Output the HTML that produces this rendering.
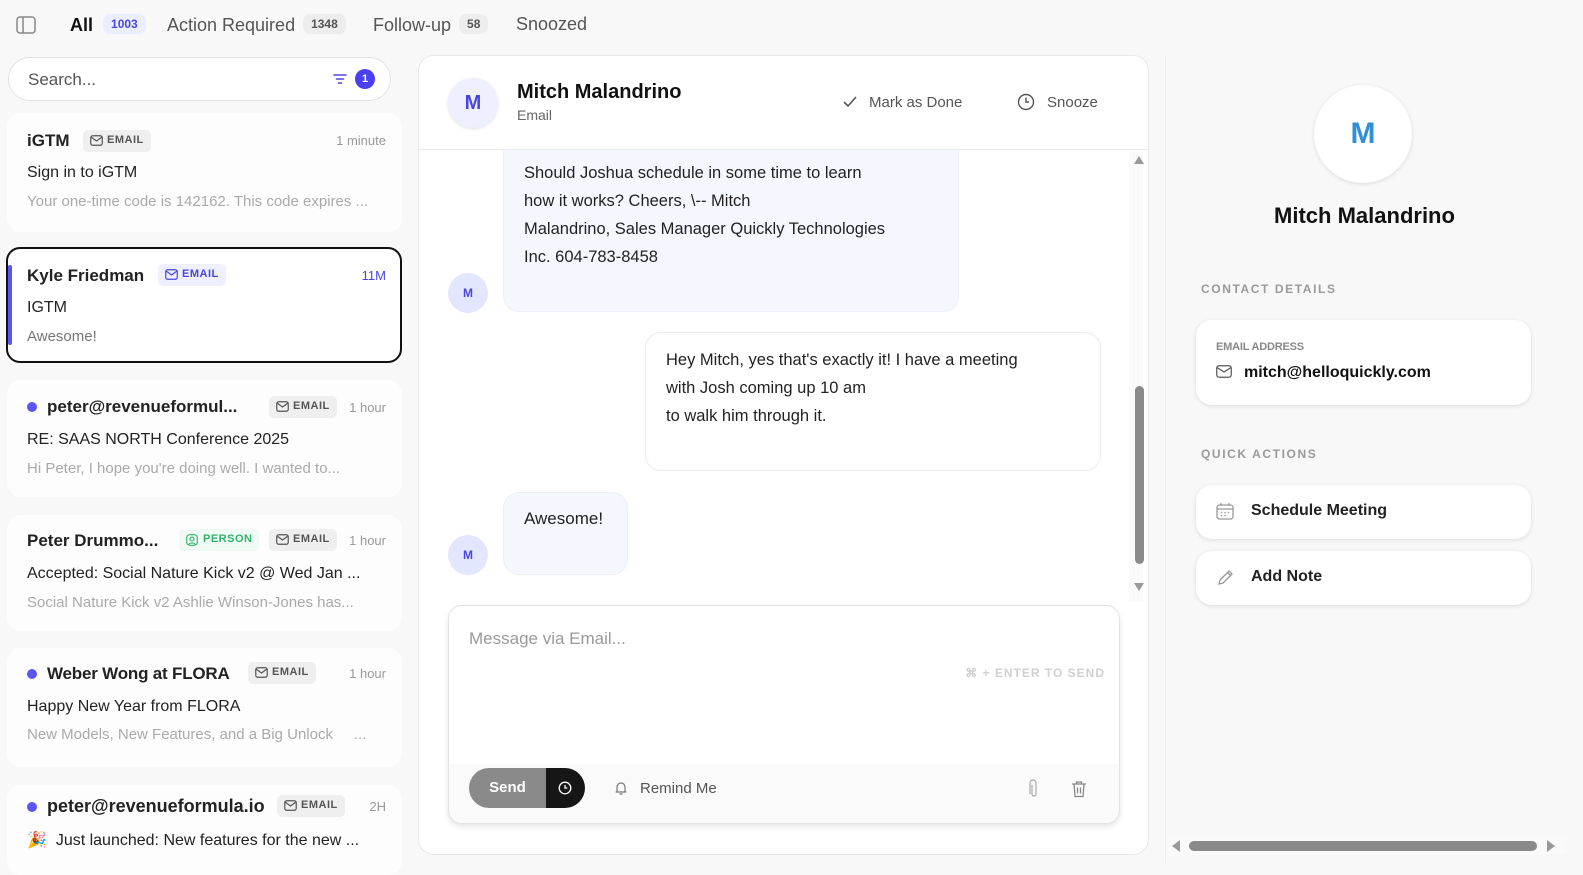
<!DOCTYPE html>
<html><head><meta charset="utf-8"><style>
*{box-sizing:border-box;margin:0;padding:0}
body{width:1583px;height:872px;overflow:hidden;background:#f8f8f8;font-family:"Liberation Sans",sans-serif;color:#1a1a1a;position:relative}
.abs{position:absolute}
.tab{position:absolute;top:14px;font-size:18px;color:#555}
.cnt{display:inline-block;font-size:12px;padding:3px 8px;border-radius:7px;background:#ededed;color:#555;margin-left:8px;vertical-align:3px;font-weight:bold}
.card{position:absolute;left:7px;width:395px;background:#fdfdfe;border-radius:14px}
.nm{position:absolute;left:20px;font-size:17px;font-weight:bold;color:#222;white-space:nowrap}
.badge{position:absolute;font-size:11px;font-weight:bold;letter-spacing:.5px;color:#555;background:#efefef;border-radius:5px;padding:4px 7px 4px 24px;height:22px}
.badge svg{position:absolute;left:7px;top:5px}
.tm{position:absolute;right:16px;font-size:13px;color:#999}
.sub{position:absolute;left:20px;font-size:16px;color:#222;white-space:nowrap}
.pre{position:absolute;left:20px;font-size:15px;color:#aaa;white-space:nowrap}
.dot{position:absolute;left:20px;width:10px;height:10px;border-radius:50%;background:#5b55f5}
.sec{position:absolute;left:1201px;font-size:12px;font-weight:bold;letter-spacing:1.6px;color:#9a9a9a}
.rc{position:absolute;left:1196px;width:335px;background:#fff;border-radius:16px;box-shadow:0 1px 4px rgba(0,0,0,.12)}
.msg{font-size:17px;line-height:28px;color:#222;white-space:nowrap}
</style></head><body>
<svg class="abs" style="left:16px;top:16px" width="20" height="18" viewBox="0 0 20 18"><rect x="1" y="1" width="18" height="16" rx="3" fill="none" stroke="#888" stroke-width="1.5"/><line x1="7" y1="1" x2="7" y2="17" stroke="#888" stroke-width="1.5"/></svg>
<div class="tab" style="left:70px;color:#111;font-weight:bold">All<span class="cnt" style="background:#ebeeff;color:#4b45e0;margin-left:10px">1003</span></div>
<div class="tab" style="left:167px">Action Required<span class="cnt">1348</span></div>
<div class="tab" style="left:373px">Follow-up<span class="cnt">58</span></div>
<div class="tab" style="left:516px">Snoozed</div>
<div class="abs" style="left:8px;top:57px;width:383px;height:44px;border:1px solid #e2e2e2;border-radius:22px;background:#fff"></div>
<div class="abs" style="left:28px;top:70px;font-size:17px;color:#555">Search...</div>
<svg class="abs" style="left:333px;top:73px" width="14" height="12" viewBox="0 0 14 12"><g stroke="#4b45e0" stroke-width="1.6" stroke-linecap="round"><line x1="1" y1="2" x2="13" y2="2"/><line x1="3.5" y1="6" x2="10.5" y2="6"/><line x1="5.5" y1="10" x2="8.5" y2="10"/></g></svg>
<div class="abs" style="left:355px;top:69px;width:20px;height:20px;border-radius:50%;background:#4b3ff0;color:#fff;font-size:11px;font-weight:bold;text-align:center;line-height:20px">1</div>
<div class="card" style="top:113px;height:119px">
 <div class="nm" style="top:18px">iGTM</div>
 <div class="badge" style="left:76px;top:17px"><svg width="13" height="11" viewBox="0 0 13 11"><rect x=".75" y=".75" width="11.5" height="9.5" rx="2" fill="none" stroke="#555" stroke-width="1.2"/><path d="M1 2l5.5 4L12 2" fill="none" stroke="#555" stroke-width="1.2"/></svg>EMAIL</div>
 <div class="tm" style="top:20px">1 minute</div>
 <div class="sub" style="top:51px">Sign in to iGTM</div>
 <div class="pre" style="top:80px">Your one-time code is 142162. This code expires ...</div>
</div>
<div class="card" style="top:247px;height:116px;background:#fff;border:2px solid #111;left:6px;width:396px">
 <div class="abs" style="left:0;top:16px;width:4px;height:80px;background:#5b55f5;border-radius:2px"></div>
 <div class="nm" style="top:17px;left:19px">Kyle Friedman</div>
 <div class="badge" style="left:150px;top:15px;background:#eef0ff;color:#4b45e0"><svg width="13" height="11" viewBox="0 0 13 11"><rect x=".75" y=".75" width="11.5" height="9.5" rx="2" fill="none" stroke="#4b45e0" stroke-width="1.2"/><path d="M1 2l5.5 4L12 2" fill="none" stroke="#4b45e0" stroke-width="1.2"/></svg>EMAIL</div>
 <div class="tm" style="top:19px;right:14px;color:#4b45e0">11M</div>
 <div class="sub" style="top:50px;left:19px">IGTM</div>
 <div class="pre" style="top:79px;left:19px;color:#777">Awesome!</div>
</div>
<div class="card" style="top:380px;height:117px">
 <div class="dot" style="top:22px"></div>
 <div class="nm" style="top:17px;left:40px">peter@revenueformul...</div>
 <div class="badge" style="left:262px;top:16px"><svg width="13" height="11" viewBox="0 0 13 11"><rect x=".75" y=".75" width="11.5" height="9.5" rx="2" fill="none" stroke="#555" stroke-width="1.2"/><path d="M1 2l5.5 4L12 2" fill="none" stroke="#555" stroke-width="1.2"/></svg>EMAIL</div>
 <div class="tm" style="top:20px">1 hour</div>
 <div class="sub" style="top:51px">RE: SAAS NORTH Conference 2025</div>
 <div class="pre" style="top:80px">Hi Peter, I hope you're doing well. I wanted to...</div>
</div>
<div class="card" style="top:515px;height:116px">
 <div class="nm" style="top:16px">Peter Drummo...</div>
 <div class="badge" style="left:172px;top:14px;background:#eefaf3;color:#2fb36b"><svg width="12" height="12" viewBox="0 0 12 12"><rect x=".7" y=".7" width="10.6" height="10.6" rx="3" fill="none" stroke="#2fb36b" stroke-width="1.1"/><circle cx="6" cy="5" r="2" fill="none" stroke="#2fb36b" stroke-width="1.1"/><path d="M2.8 10.5c.8-2 5.6-2 6.4 0" fill="none" stroke="#2fb36b" stroke-width="1.1"/></svg>PERSON</div>
 <div class="badge" style="left:262px;top:14px"><svg width="13" height="11" viewBox="0 0 13 11"><rect x=".75" y=".75" width="11.5" height="9.5" rx="2" fill="none" stroke="#555" stroke-width="1.2"/><path d="M1 2l5.5 4L12 2" fill="none" stroke="#555" stroke-width="1.2"/></svg>EMAIL</div>
 <div class="tm" style="top:18px">1 hour</div>
 <div class="sub" style="top:50px">Accepted: Social Nature Kick v2 @ Wed Jan ...</div>
 <div class="pre" style="top:79px">Social Nature Kick v2 Ashlie Winson-Jones has...</div>
</div>
<div class="card" style="top:648px;height:119px">
 <div class="dot" style="top:21px"></div>
 <div class="nm" style="top:16px;left:40px;font-size:17px;letter-spacing:-.2px">Weber Wong at FLORA</div>
 <div class="badge" style="left:241px;top:14px"><svg width="13" height="11" viewBox="0 0 13 11"><rect x=".75" y=".75" width="11.5" height="9.5" rx="2" fill="none" stroke="#555" stroke-width="1.2"/><path d="M1 2l5.5 4L12 2" fill="none" stroke="#555" stroke-width="1.2"/></svg>EMAIL</div>
 <div class="tm" style="top:18px">1 hour</div>
 <div class="sub" style="top:50px">Happy New Year from FLORA</div>
 <div class="pre" style="top:78px">New Models, New Features, and a Big Unlock&nbsp;&nbsp;&nbsp;&nbsp;&nbsp;...</div>
</div>
<div class="card" style="top:785px;height:90px">
 <div class="dot" style="top:17px"></div>
 <div class="nm" style="top:11px;left:40px;font-size:18px">peter@revenueformula.io</div>
 <div class="badge" style="left:270px;top:10px"><svg width="13" height="11" viewBox="0 0 13 11"><rect x=".75" y=".75" width="11.5" height="9.5" rx="2" fill="none" stroke="#555" stroke-width="1.2"/><path d="M1 2l5.5 4L12 2" fill="none" stroke="#555" stroke-width="1.2"/></svg>EMAIL</div>
 <div class="tm" style="top:14px">2H</div>
 <div class="sub" style="top:45px">🎉&nbsp; Just launched: New features for the new ...</div>
</div>
<div class="abs" style="left:418px;top:55px;width:731px;height:800px;background:#fff;border:1px solid #e8e8e8;border-radius:16px;overflow:hidden">
 <div class="abs" style="left:0;top:0;width:731px;height:94px;border-bottom:1px solid #ececec;background:#fff;z-index:2">
  <div class="abs" style="left:29px;top:22px;width:50px;height:50px;border-radius:50%;background:#eef0ff;box-shadow:0 1px 3px rgba(0,0,0,.12);color:#4b45e0;font-weight:bold;font-size:20px;text-align:center;line-height:50px">M</div>
  <div class="abs" style="left:98px;top:25px;font-size:20px;font-weight:bold;color:#111">Mitch Malandrino</div>
  <div class="abs" style="left:98px;top:51px;font-size:14px;color:#666">Email</div>
  <svg class="abs" style="left:424px;top:40px" width="14" height="12" viewBox="0 0 14 12"><path d="M1 6l4 4 8-9" fill="none" stroke="#555" stroke-width="1.6"/></svg>
  <div class="abs" style="left:450px;top:38px;font-size:15px;color:#555">Mark as Done</div>
  <svg class="abs" style="left:598px;top:37px" width="18" height="18" viewBox="0 0 18 18"><circle cx="9" cy="9" r="7.5" fill="none" stroke="#555" stroke-width="1.4"/><path d="M9 4.5V9h3" fill="none" stroke="#555" stroke-width="1.4"/></svg>
  <div class="abs" style="left:628px;top:38px;font-size:15px;color:#555">Snooze</div>
 </div>
 <div class="abs msg" style="left:84px;top:40px;width:456px;height:216px;background:#f5f7ff;border:1px solid #eceffc;border-radius:16px;padding:62px 20px 0 20px;font-size:16.5px">Should Joshua schedule in some time to learn<br>how it works? Cheers, \-- Mitch<br>Malandrino, Sales Manager Quickly Technologies<br>Inc. 604-783-8458</div>
 <div class="abs" style="left:29px;top:217px;width:40px;height:40px;border-radius:50%;background:#e3e6ff;color:#4b45e0;font-size:12px;font-weight:bold;text-align:center;line-height:40px">M</div>
 <div class="abs msg" style="left:226px;top:276px;width:456px;height:139px;border:1px solid #ececec;border-radius:16px;padding:13px 20px;font-size:16.5px">Hey Mitch, yes that's exactly it! I have a meeting<br>with Josh coming up 10 am<br>to walk him through it.</div>
 <div class="abs msg" style="left:84px;top:436px;width:125px;height:83px;background:#f5f7ff;border:1px solid #eceffc;border-radius:16px;padding:12px 20px">Awesome!</div>
 <div class="abs" style="left:29px;top:479px;width:40px;height:40px;border-radius:50%;background:#e3e6ff;color:#4b45e0;font-size:12px;font-weight:bold;text-align:center;line-height:40px">M</div>
 <div class="abs" style="left:710px;top:96px;width:14px;height:450px;background:#fafafa"></div>
 <div class="abs" style="left:715px;top:100px;width:0;height:0;border-left:5px solid transparent;border-right:5px solid transparent;border-bottom:8px solid #999"></div>
 <div class="abs" style="left:716px;top:330px;width:9px;height:178px;background:#8a8a8a;border-radius:5px"></div>
 <div class="abs" style="left:715px;top:527px;width:0;height:0;border-left:5px solid transparent;border-right:5px solid transparent;border-top:8px solid #999"></div>
 <div class="abs" style="left:29px;top:549px;width:672px;height:219px;border:1px solid #e3e3e3;border-radius:14px;box-shadow:0 3px 6px rgba(0,0,0,.1);overflow:hidden;background:#fff">
  <div class="abs" style="left:20px;top:23px;font-size:17px;color:#999">Message via Email...</div>
  <div class="abs" style="right:14px;top:60px;font-size:12px;font-weight:bold;letter-spacing:1px;color:#d0d0d0">⌘ + ENTER TO SEND</div>
  <div class="abs" style="left:0;top:158px;width:672px;height:61px;background:#fafafa"></div>
  <div class="abs" style="left:20px;top:162px;width:116px;height:40px;border-radius:20px;overflow:hidden">
   <div class="abs" style="left:0;top:0;width:77px;height:40px;background:#8a8a8a;color:#fff;font-weight:bold;font-size:15px;text-align:center;line-height:40px">Send</div>
   <div class="abs" style="left:77px;top:0;width:39px;height:40px;background:#161616"></div>
   <svg class="abs" style="left:89px;top:13px" width="14" height="14" viewBox="0 0 14 14"><circle cx="7" cy="7" r="5.8" fill="none" stroke="#fff" stroke-width="1.3"/><path d="M7 4v3h2.3" fill="none" stroke="#fff" stroke-width="1.3"/></svg>
  </div>
  <svg class="abs" style="left:166px;top:175px" width="12" height="15" viewBox="0 0 12 15"><path d="M2 11V6a4 4 0 018 0v5h1.3H.7M4.5 13h3" fill="none" stroke="#777" stroke-width="1.2"/></svg>
  <div class="abs" style="left:191px;top:174px;font-size:15px;color:#555">Remind Me</div>
  <svg class="abs" style="left:580px;top:173px" width="10" height="20" viewBox="0 0 10 20"><path d="M3 6v9a2 2 0 004 0V4a3 3 0 00-6 0v11" fill="none" stroke="#aaa" stroke-width="1.2"/></svg>
  <svg class="abs" style="left:622px;top:174px" width="16" height="18" viewBox="0 0 16 18"><path d="M1 4h14M5.5 4V2h5v2M3 4l1 12.5h8L13 4M6.5 7.5v6M9.5 7.5v6" fill="none" stroke="#888" stroke-width="1.3"/></svg>
 </div>
</div>
<div class="abs" style="left:1165px;top:55px;width:1px;height:808px;background:#ececec"></div>
<div class="abs" style="left:1314px;top:85px;width:98px;height:98px;border-radius:50%;background:#fff;box-shadow:0 1px 4px rgba(0,0,0,.12);color:#2f8fd8;font-size:30px;font-weight:bold;text-align:center;line-height:98px">M</div>
<div class="abs" style="left:1166px;top:203px;width:397px;text-align:center;font-size:22px;font-weight:bold;color:#111">Mitch Malandrino</div>
<div class="sec" style="top:282px">CONTACT DETAILS</div>
<div class="rc" style="top:320px;height:85px">
 <div class="abs" style="left:20px;top:21px;font-size:11px;font-weight:bold;color:#888;letter-spacing:-.2px">EMAIL ADDRESS</div>
 <svg class="abs" style="left:20px;top:45px" width="16" height="13" viewBox="0 0 16 13"><rect x=".75" y=".75" width="14.5" height="11.5" rx="2.5" fill="none" stroke="#555" stroke-width="1.2"/><path d="M1 2.5l7 4.5 7-4.5" fill="none" stroke="#555" stroke-width="1.2"/></svg>
 <div class="abs" style="left:48px;top:44px;font-size:16px;font-weight:bold;color:#111">mitch@helloquickly.com</div>
</div>
<div class="sec" style="top:447px">QUICK ACTIONS</div>
<div class="rc" style="top:485px;height:54px">
 <svg class="abs" style="left:20px;top:17px" width="18" height="18" viewBox="0 0 18 18"><rect x="1" y="3" width="16" height="14" rx="2.5" fill="none" stroke="#999" stroke-width="1.3"/><path d="M1 7h16M5 1v3M13 1v3" stroke="#999" stroke-width="1.3"/><g fill="#999"><circle cx="5.5" cy="10.5" r=".8"/><circle cx="9" cy="10.5" r=".8"/><circle cx="12.5" cy="10.5" r=".8"/><circle cx="5.5" cy="13.5" r=".8"/><circle cx="9" cy="13.5" r=".8"/></g></svg>
 <div class="abs" style="left:55px;top:17px;font-size:16px;font-weight:bold;color:#222">Schedule Meeting</div>
</div>
<div class="rc" style="top:551px;height:54px">
 <svg class="abs" style="left:21px;top:18px" width="17" height="17" viewBox="0 0 17 17"><path d="M2 15l1-4L12 2l3 3-9 9z M10.5 3.5l3 3" fill="none" stroke="#999" stroke-width="1.3"/></svg>
 <div class="abs" style="left:55px;top:17px;font-size:16px;font-weight:bold;color:#222">Add Note</div>
</div>
<div class="abs" style="left:1167px;top:836px;width:400px;height:18px;background:#fafafa"></div>
<div class="abs" style="left:1172px;top:840px;width:0;height:0;border-top:6px solid transparent;border-bottom:6px solid transparent;border-right:8px solid #999"></div>
<div class="abs" style="left:1189px;top:841px;width:348px;height:10px;background:#8a8a8a;border-radius:5px"></div>
<div class="abs" style="left:1547px;top:840px;width:0;height:0;border-top:6px solid transparent;border-bottom:6px solid transparent;border-left:8px solid #999"></div>
</body></html>
